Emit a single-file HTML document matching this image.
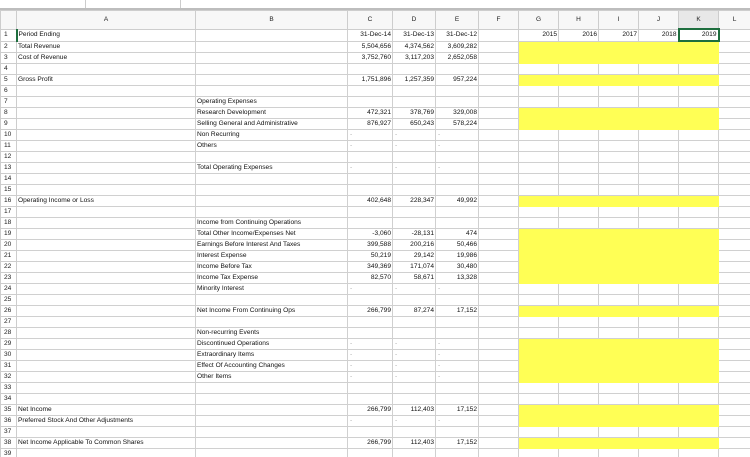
<!DOCTYPE html>
<html><head><meta charset="utf-8"><style>
html,body{margin:0;padding:0;background:#fff;width:750px;height:457px;overflow:hidden}
body{font-family:"Liberation Sans",sans-serif;font-size:7px;color:#111;position:relative}
.top{position:absolute;left:0;top:0;width:750px;height:8px;background:#fff;border-bottom:2px solid #bdbdbd}
.top .b1{position:absolute;left:85px;top:0;width:1px;height:8px;background:#ccc}
.top .b2{position:absolute;left:180px;top:0;width:1px;height:8px;background:#ccc}
table{position:absolute;left:0;top:10px;border-collapse:collapse;table-layout:fixed;width:750px}
td,th{border:1px solid #d0d0d0;height:10px;padding:0 1px;line-height:10px;white-space:nowrap;overflow:hidden;font-weight:normal;font-size:6.6px}
thead th{height:17px;background:#f7f7f7;text-align:center;font-size:6.5px;color:#222;border-color:#cdcdcd}
tbody th{text-align:left;padding-left:3px;background:#fff;color:#222;font-size:6.6px;border-color:#cdcdcd}
td.n{text-align:right}
td.d{color:#aaa;padding-left:2px}
tr.y td:nth-child(8),tr.y td:nth-child(9),tr.y td:nth-child(10),tr.y td:nth-child(11),tr.y td:nth-child(12){background:#ffff55;border-color:#ffff55}
td.sel{border:2px solid #1e6e3e}
td.ab{border-left:2px solid #1e6e3e}
</style></head><body>
<div class="top"><div class="b1"></div><div class="b2"></div></div>
<table>
<colgroup><col style="width:16px"><col style="width:179px"><col style="width:152px"><col style="width:45px"><col style="width:43px"><col style="width:43px"><col style="width:40px"><col style="width:40px"><col style="width:40px"><col style="width:40px"><col style="width:40px"><col style="width:40px"><col style="width:32px"></colgroup>
<thead><tr><th></th><th>A</th><th>B</th><th>C</th><th>D</th><th>E</th><th>F</th><th>G</th><th>H</th><th>I</th><th>J</th><th style="background:#e8e8e8">K</th><th>L</th></tr></thead>
<tbody>
<tr><th>1</th><td class="ab">Period Ending</td><td></td><td class="n">31-Dec-14</td><td class="n">31-Dec-13</td><td class="n">31-Dec-12</td><td></td><td class="n">2015</td><td class="n">2016</td><td class="n">2017</td><td class="n">2018</td><td class="n sel">2019</td><td></td></tr>
<tr class="y"><th>2</th><td>Total Revenue</td><td></td><td class="n">5,504,656</td><td class="n">4,374,562</td><td class="n">3,609,282</td><td></td><td></td><td></td><td></td><td></td><td></td><td></td></tr>
<tr class="y"><th>3</th><td>Cost of Revenue</td><td></td><td class="n">3,752,760</td><td class="n">3,117,203</td><td class="n">2,652,058</td><td></td><td></td><td></td><td></td><td></td><td></td><td></td></tr>
<tr><th>4</th><td></td><td></td><td></td><td></td><td></td><td></td><td></td><td></td><td></td><td></td><td></td><td></td></tr>
<tr class="y"><th>5</th><td>Gross Profit</td><td></td><td class="n">1,751,896</td><td class="n">1,257,359</td><td class="n">957,224</td><td></td><td></td><td></td><td></td><td></td><td></td><td></td></tr>
<tr><th>6</th><td></td><td></td><td></td><td></td><td></td><td></td><td></td><td></td><td></td><td></td><td></td><td></td></tr>
<tr><th>7</th><td></td><td>Operating Expenses</td><td></td><td></td><td></td><td></td><td></td><td></td><td></td><td></td><td></td><td></td></tr>
<tr class="y"><th>8</th><td></td><td>Research Development</td><td class="n">472,321</td><td class="n">378,769</td><td class="n">329,008</td><td></td><td></td><td></td><td></td><td></td><td></td><td></td></tr>
<tr class="y"><th>9</th><td></td><td>Selling General and Administrative</td><td class="n">876,927</td><td class="n">650,243</td><td class="n">578,224</td><td></td><td></td><td></td><td></td><td></td><td></td><td></td></tr>
<tr><th>10</th><td></td><td>Non Recurring</td><td class="d">-</td><td class="d">-</td><td class="d">-</td><td></td><td></td><td></td><td></td><td></td><td></td><td></td></tr>
<tr><th>11</th><td></td><td>Others</td><td class="d">-</td><td class="d">-</td><td class="d">-</td><td></td><td></td><td></td><td></td><td></td><td></td><td></td></tr>
<tr><th>12</th><td></td><td></td><td></td><td></td><td></td><td></td><td></td><td></td><td></td><td></td><td></td><td></td></tr>
<tr><th>13</th><td></td><td>Total Operating Expenses</td><td class="d">-</td><td class="d">-</td><td class="d">-</td><td></td><td></td><td></td><td></td><td></td><td></td><td></td></tr>
<tr><th>14</th><td></td><td></td><td></td><td></td><td></td><td></td><td></td><td></td><td></td><td></td><td></td><td></td></tr>
<tr><th>15</th><td></td><td></td><td></td><td></td><td></td><td></td><td></td><td></td><td></td><td></td><td></td><td></td></tr>
<tr class="y"><th>16</th><td>Operating Income or Loss</td><td></td><td class="n">402,648</td><td class="n">228,347</td><td class="n">49,992</td><td></td><td></td><td></td><td></td><td></td><td></td><td></td></tr>
<tr><th>17</th><td></td><td></td><td></td><td></td><td></td><td></td><td></td><td></td><td></td><td></td><td></td><td></td></tr>
<tr><th>18</th><td></td><td>Income from Continuing Operations</td><td></td><td></td><td></td><td></td><td></td><td></td><td></td><td></td><td></td><td></td></tr>
<tr class="y"><th>19</th><td></td><td>Total Other Income/Expenses Net</td><td class="n">-3,060</td><td class="n">-28,131</td><td class="n">474</td><td></td><td></td><td></td><td></td><td></td><td></td><td></td></tr>
<tr class="y"><th>20</th><td></td><td>Earnings Before Interest And Taxes</td><td class="n">399,588</td><td class="n">200,216</td><td class="n">50,466</td><td></td><td></td><td></td><td></td><td></td><td></td><td></td></tr>
<tr class="y"><th>21</th><td></td><td>Interest Expense</td><td class="n">50,219</td><td class="n">29,142</td><td class="n">19,986</td><td></td><td></td><td></td><td></td><td></td><td></td><td></td></tr>
<tr class="y"><th>22</th><td></td><td>Income Before Tax</td><td class="n">349,369</td><td class="n">171,074</td><td class="n">30,480</td><td></td><td></td><td></td><td></td><td></td><td></td><td></td></tr>
<tr class="y"><th>23</th><td></td><td>Income Tax Expense</td><td class="n">82,570</td><td class="n">58,671</td><td class="n">13,328</td><td></td><td></td><td></td><td></td><td></td><td></td><td></td></tr>
<tr><th>24</th><td></td><td>Minority Interest</td><td class="d">-</td><td class="d">-</td><td class="d">-</td><td></td><td></td><td></td><td></td><td></td><td></td><td></td></tr>
<tr><th>25</th><td></td><td></td><td></td><td></td><td></td><td></td><td></td><td></td><td></td><td></td><td></td><td></td></tr>
<tr class="y"><th>26</th><td></td><td>Net Income From Continuing Ops</td><td class="n">266,799</td><td class="n">87,274</td><td class="n">17,152</td><td></td><td></td><td></td><td></td><td></td><td></td><td></td></tr>
<tr><th>27</th><td></td><td></td><td></td><td></td><td></td><td></td><td></td><td></td><td></td><td></td><td></td><td></td></tr>
<tr><th>28</th><td></td><td>Non-recurring Events</td><td></td><td></td><td></td><td></td><td></td><td></td><td></td><td></td><td></td><td></td></tr>
<tr class="y"><th>29</th><td></td><td>Discontinued Operations</td><td class="d">-</td><td class="d">-</td><td class="d">-</td><td></td><td></td><td></td><td></td><td></td><td></td><td></td></tr>
<tr class="y"><th>30</th><td></td><td>Extraordinary Items</td><td class="d">-</td><td class="d">-</td><td class="d">-</td><td></td><td></td><td></td><td></td><td></td><td></td><td></td></tr>
<tr class="y"><th>31</th><td></td><td>Effect Of Accounting Changes</td><td class="d">-</td><td class="d">-</td><td class="d">-</td><td></td><td></td><td></td><td></td><td></td><td></td><td></td></tr>
<tr class="y"><th>32</th><td></td><td>Other Items</td><td class="d">-</td><td class="d">-</td><td class="d">-</td><td></td><td></td><td></td><td></td><td></td><td></td><td></td></tr>
<tr><th>33</th><td></td><td></td><td></td><td></td><td></td><td></td><td></td><td></td><td></td><td></td><td></td><td></td></tr>
<tr><th>34</th><td></td><td></td><td></td><td></td><td></td><td></td><td></td><td></td><td></td><td></td><td></td><td></td></tr>
<tr class="y"><th>35</th><td>Net Income</td><td></td><td class="n">266,799</td><td class="n">112,403</td><td class="n">17,152</td><td></td><td></td><td></td><td></td><td></td><td></td><td></td></tr>
<tr class="y"><th>36</th><td>Preferred Stock And Other Adjustments</td><td></td><td class="d">-</td><td class="d">-</td><td class="d">-</td><td></td><td></td><td></td><td></td><td></td><td></td><td></td></tr>
<tr><th>37</th><td></td><td></td><td></td><td></td><td></td><td></td><td></td><td></td><td></td><td></td><td></td><td></td></tr>
<tr class="y"><th>38</th><td>Net Income Applicable To Common Shares</td><td></td><td class="n">266,799</td><td class="n">112,403</td><td class="n">17,152</td><td></td><td></td><td></td><td></td><td></td><td></td><td></td></tr>
<tr><th>39</th><td></td><td></td><td></td><td></td><td></td><td></td><td></td><td></td><td></td><td></td><td></td><td></td></tr>
</tbody></table>
</body></html>
